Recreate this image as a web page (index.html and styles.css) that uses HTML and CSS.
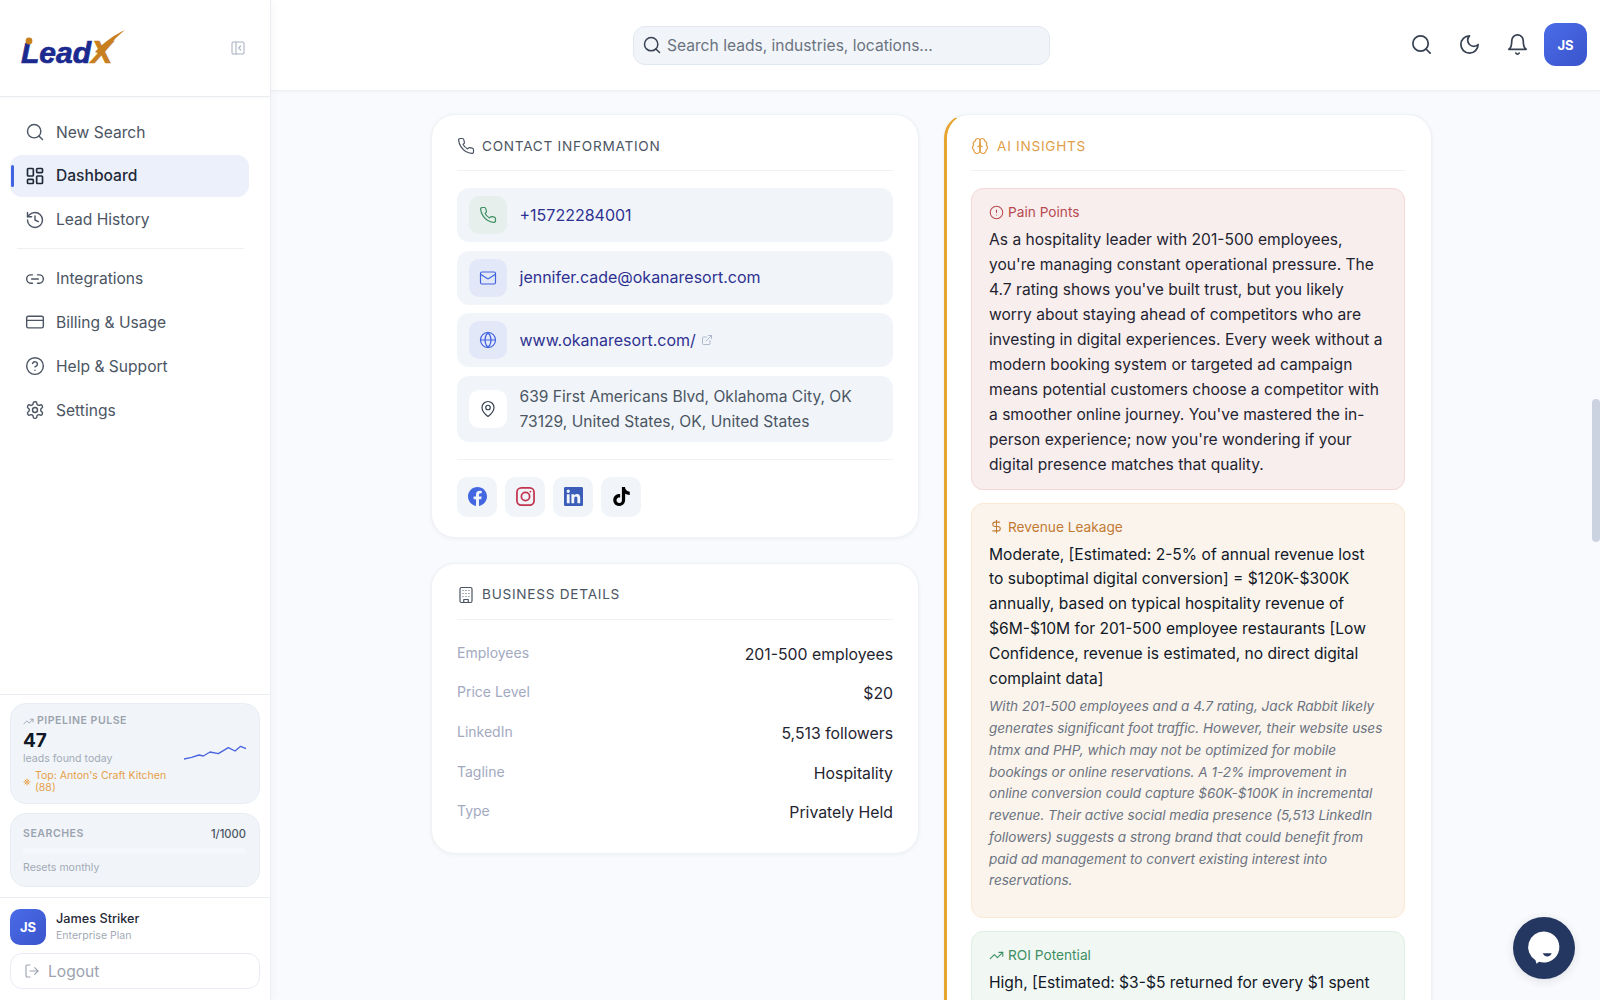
FILE: index.html
```html
<!DOCTYPE html>
<html lang="en">
<head>
<meta charset="utf-8">
<title>LeadX</title>
<link rel="stylesheet" href="styles.css">
</head>
<body>
<svg class="sprite" xmlns="http://www.w3.org/2000/svg">
<symbol id="i-search" viewBox="0 0 24 24"><circle cx="11" cy="11" r="8"/><path d="m21 21-4.3-4.3"/></symbol>
<symbol id="i-dash" viewBox="0 0 24 24"><rect x="3" y="3" width="7" height="9" rx="1"/><rect x="14" y="3" width="7" height="5" rx="1"/><rect x="14" y="12" width="7" height="9" rx="1"/><rect x="3" y="16" width="7" height="5" rx="1"/></symbol>
<symbol id="i-history" viewBox="0 0 24 24"><path d="M3 12a9 9 0 1 0 9-9 9.75 9.75 0 0 0-6.74 2.74L3 8"/><path d="M3 3v5h5"/><path d="M12 7v5l4 2"/></symbol>
<symbol id="i-link" viewBox="0 0 24 24"><path d="M9 17H7A5 5 0 0 1 7 7h2"/><path d="M15 7h2a5 5 0 1 1 0 10h-2"/><path d="M8 12h8"/></symbol>
<symbol id="i-card" viewBox="0 0 24 24"><rect x="2" y="5" width="20" height="14" rx="2"/><path d="M2 10h20"/></symbol>
<symbol id="i-help" viewBox="0 0 24 24"><circle cx="12" cy="12" r="10"/><path d="M9.09 9a3 3 0 0 1 5.83 1c0 2-3 3-3 3"/><path d="M12 17h.01"/></symbol>
<symbol id="i-gear" viewBox="0 0 24 24"><path d="M12.22 2h-.44a2 2 0 0 0-2 2v.18a2 2 0 0 1-1 1.73l-.43.25a2 2 0 0 1-2 0l-.15-.08a2 2 0 0 0-2.73.73l-.22.38a2 2 0 0 0 .73 2.73l.15.1a2 2 0 0 1 1 1.72v.51a2 2 0 0 1-1 1.74l-.15.09a2 2 0 0 0-.73 2.73l.22.38a2 2 0 0 0 2.73.73l.15-.08a2 2 0 0 1 2 0l.43.25a2 2 0 0 1 1 1.73V20a2 2 0 0 0 2 2h.44a2 2 0 0 0 2-2v-.18a2 2 0 0 1 1-1.73l.43-.25a2 2 0 0 1 2 0l.15.08a2 2 0 0 0 2.73-.73l.22-.39a2 2 0 0 0-.73-2.73l-.15-.08a2 2 0 0 1-1-1.74v-.5a2 2 0 0 1 1-1.74l.15-.09a2 2 0 0 0 .73-2.73l-.22-.38a2 2 0 0 0-2.73-.73l-.15.08a2 2 0 0 1-2 0l-.43-.25a2 2 0 0 1-1-1.73V4a2 2 0 0 0-2-2z"/><circle cx="12" cy="12" r="3"/></symbol>
<symbol id="i-phone" viewBox="0 0 24 24"><path d="M22 16.92v3a2 2 0 0 1-2.18 2 19.79 19.79 0 0 1-8.63-3.07 19.5 19.5 0 0 1-6-6 19.79 19.79 0 0 1-3.07-8.67A2 2 0 0 1 4.11 2h3a2 2 0 0 1 2 1.72 12.84 12.84 0 0 0 .7 2.81 2 2 0 0 1-.45 2.11L8.09 9.91a16 16 0 0 0 6 6l1.27-1.27a2 2 0 0 1 2.11-.45 12.84 12.84 0 0 0 2.81.7A2 2 0 0 1 22 16.92z"/></symbol>
<symbol id="i-mail" viewBox="0 0 24 24"><rect x="2" y="4" width="20" height="16" rx="2"/><path d="m22 7-8.97 5.7a1.94 1.94 0 0 1-2.06 0L2 7"/></symbol>
<symbol id="i-globe" viewBox="0 0 24 24"><circle cx="12" cy="12" r="10"/><path d="M12 2a14.5 14.5 0 0 0 0 20 14.5 14.5 0 0 0 0-20"/><path d="M2 12h20"/></symbol>
<symbol id="i-ext" viewBox="0 0 24 24"><path d="M15 3h6v6"/><path d="M10 14 21 3"/><path d="M18 13v6a2 2 0 0 1-2 2H5a2 2 0 0 1-2-2V8a2 2 0 0 1 2-2h6"/></symbol>
<symbol id="i-pin" viewBox="0 0 24 24"><path d="M20 10c0 6-8 12-8 12s-8-6-8-12a8 8 0 0 1 16 0Z"/><circle cx="12" cy="10" r="3"/></symbol>
<symbol id="i-building" viewBox="0 0 24 24"><rect x="4" y="2" width="16" height="20" rx="2"/><path d="M9 22v-4h6v4"/><path d="M8 6h.01M12 6h.01M16 6h.01M8 10h.01M12 10h.01M16 10h.01M8 14h.01M12 14h.01M16 14h.01"/></symbol>
<symbol id="i-brain" viewBox="0 0 24 24"><path d="M12 5a3 3 0 1 0-5.997.125 4 4 0 0 0-2.526 5.77 4 4 0 0 0 .556 6.588A4 4 0 1 0 12 18Z"/><path d="M12 5a3 3 0 1 1 5.997.125 4 4 0 0 1 2.526 5.77 4 4 0 0 1-.556 6.588A4 4 0 1 1 12 18Z"/><path d="M15 13a4.5 4.5 0 0 1-3-4 4.5 4.5 0 0 1-3 4"/><path d="M12 18V9"/></symbol>
<symbol id="i-alert" viewBox="0 0 24 24"><circle cx="12" cy="12" r="10"/><path d="M12 8v4"/><path d="M12 16h.01"/></symbol>
<symbol id="i-dollar" viewBox="0 0 24 24"><path d="M12 2v20"/><path d="M17 5H9.5a3.5 3.5 0 0 0 0 7h5a3.5 3.5 0 0 1 0 7H6"/></symbol>
<symbol id="i-trend" viewBox="0 0 24 24"><path d="M22 7l-8.5 8.5-5-5L2 17"/><path d="M16 7h6v6"/></symbol>
<symbol id="i-moon" viewBox="0 0 24 24"><path d="M12 3a6 6 0 0 0 9 9 9 9 0 1 1-9-9Z"/></symbol>
<symbol id="i-bell" viewBox="0 0 24 24"><path d="M6 8a6 6 0 0 1 12 0c0 7 3 9 3 9H3s3-2 3-9"/><path d="M10.3 21a1.94 1.94 0 0 0 3.4 0"/></symbol>
<symbol id="i-logout" viewBox="0 0 24 24"><path d="M9 21H5a2 2 0 0 1-2-2V5a2 2 0 0 1 2-2h4"/><path d="m16 17 5-5-5-5"/><path d="M21 12H9"/></symbol>
<symbol id="i-panel" viewBox="0 0 24 24"><rect x="3" y="3" width="18" height="18" rx="2"/><path d="M9 3v18"/><path d="m16 15-3-3 3-3"/></symbol>
<symbol id="i-spark" viewBox="0 0 24 24"><path d="M12 3v6M12 15v6M3 12h6M15 12h6M6 6l4 4M14 14l4 4M18 6l-4 4M10 14l-4 4"/></symbol>
</svg>

<div class="app">
  <aside class="sidebar">
    <div class="brand">
      <div class="logo">
        <span class="logo-lead">Lead</span><span class="logo-x">X</span>
        <svg class="logo-swoosh" viewBox="0 0 110 40"><circle cx="8" cy="13" r="3.4" fill="#c87f20"/><path d="M74 24C83 14 93 7 104 2 95 9 88 17 82 27Z" fill="#c87f20"/></svg>
      </div>
      <svg class="ic ic-collapse"><use href="#i-panel"/></svg>
    </div>
    <nav class="nav">
      <a class="nav-item"><svg class="ic"><use href="#i-search"/></svg>New Search</a>
      <a class="nav-item active"><svg class="ic"><use href="#i-dash"/></svg>Dashboard</a>
      <a class="nav-item"><svg class="ic"><use href="#i-history"/></svg>Lead History</a>
      <div class="nav-divider"></div>
      <a class="nav-item"><svg class="ic"><use href="#i-link"/></svg>Integrations</a>
      <a class="nav-item"><svg class="ic"><use href="#i-card"/></svg>Billing &amp; Usage</a>
      <a class="nav-item"><svg class="ic"><use href="#i-help"/></svg>Help &amp; Support</a>
      <a class="nav-item"><svg class="ic"><use href="#i-gear"/></svg>Settings</a>
    </nav>
    <div class="widgets">
      <div class="widget pulse">
        <div class="pulse-left">
          <div class="widget-title"><svg class="ic ic-title"><use href="#i-trend"/></svg>PIPELINE PULSE</div>
          <div class="pulse-num">47</div>
          <div class="widget-note">leads found today</div>
          <div class="pulse-top"><svg class="ic ic-spark"><use href="#i-spark"/></svg><span>Top: Anton's Craft Kitchen (88)</span></div>
        </div>
        <svg class="spark" viewBox="552 195 192 48"><polyline points="552,237 575,232 597,225 610,228 630,216 655,221 685,203 705,213 722,199 738,206"/></svg>
      </div>
      <div class="widget searches">
        <div class="searches-head"><span class="widget-title">SEARCHES</span><span class="searches-count">1/1000</span></div>
        <div class="bar"></div>
        <div class="widget-note">Resets monthly</div>
      </div>
    </div>
    <div class="account">
      <div class="user">
        <div class="avatar avatar-sm">JS</div>
        <div>
          <div class="user-name">James Striker</div>
          <div class="user-plan">Enterprise Plan</div>
        </div>
      </div>
      <button class="logout"><svg class="ic ic-logout"><use href="#i-logout"/></svg>Logout</button>
    </div>
  </aside>

  <main class="main">
    <header class="topbar">
      <div class="search"><svg class="ic ic-s"><use href="#i-search"/></svg><span>Search leads, industries, locations...</span></div>
      <div class="top-actions">
        <span class="top-btn"><svg class="ic ic-top"><use href="#i-search"/></svg></span>
        <span class="top-btn"><svg class="ic ic-top"><use href="#i-moon"/></svg></span>
        <span class="top-btn"><svg class="ic ic-top"><use href="#i-bell"/></svg></span>
        <div class="avatar avatar-lg">JS</div>
      </div>
    </header>
    <div class="content">
      <div class="grid">
        <div class="col">
          <section class="card">
            <h2 class="card-head"><svg class="ic ic-head"><use href="#i-phone"/></svg>CONTACT INFORMATION</h2>
            <div class="rows">
              <div class="row"><span class="row-ic green"><svg class="ic"><use href="#i-phone"/></svg></span><a class="row-link">+15722284001</a></div>
              <div class="row"><span class="row-ic blue"><svg class="ic"><use href="#i-mail"/></svg></span><a class="row-link">jennifer.cade@okanaresort.com</a></div>
              <div class="row"><span class="row-ic blue"><svg class="ic"><use href="#i-globe"/></svg></span><a class="row-link">www.okanaresort.com/</a><svg class="ic ic-ext"><use href="#i-ext"/></svg></div>
              <div class="row"><span class="row-ic white"><svg class="ic"><use href="#i-pin"/></svg></span><span class="row-text">639 First Americans Blvd, Oklahoma City, OK 73129, United States, OK, United States</span></div>
            </div>
            <div class="socials">
              <span class="social"><svg class="logo-fb" viewBox="0 0 24 24"><path d="M24 12.073c0-6.627-5.373-12-12-12s-12 5.373-12 12c0 5.99 4.388 10.954 10.125 11.854v-8.385H7.078v-3.47h3.047V9.43c0-3.007 1.792-4.669 4.533-4.669 1.312 0 2.686.235 2.686.235v2.953H15.83c-1.491 0-1.956.925-1.956 1.874v2.25h3.328l-.532 3.47h-2.796v8.385C19.612 23.027 24 18.062 24 12.073z"/></svg></span>
              <span class="social"><svg class="logo-ig" viewBox="0 0 24 24"><rect x="1.2" y="1.2" width="21.6" height="21.6" rx="5.5"/><circle cx="12" cy="12" r="5.2"/><circle class="ig-dot" cx="18.2" cy="5.8" r="1.2"/></svg></span>
              <span class="social"><svg class="logo-in" viewBox="0 0 24 24"><path d="M20.447 20.452h-3.554v-5.569c0-1.328-.027-3.037-1.852-3.037-1.853 0-2.136 1.445-2.136 2.939v5.667H9.351V9h3.414v1.561h.046c.477-.9 1.637-1.85 3.37-1.85 3.601 0 4.267 2.37 4.267 5.455v6.286zM5.337 7.433a2.062 2.062 0 0 1-2.063-2.065 2.064 2.064 0 1 1 2.063 2.065zm1.782 13.019H3.555V9h3.564v11.452zM22.225 0H1.771C.792 0 0 .774 0 1.729v20.542C0 23.227.792 24 1.771 24h20.451C23.2 24 24 23.227 24 22.271V1.729C24 .774 23.2 0 22.222 0h.003z"/></svg></span>
              <span class="social"><svg class="logo-tt" viewBox="0 0 24 24"><path d="M12.525.02c1.31-.02 2.61-.01 3.91-.02.08 1.53.63 3.09 1.75 4.17 1.12 1.11 2.7 1.62 4.24 1.79v4.03c-1.44-.05-2.89-.35-4.2-.97-.57-.26-1.1-.59-1.62-.93-.01 2.92.01 5.84-.02 8.75-.08 1.4-.54 2.79-1.35 3.94-1.31 1.92-3.58 3.17-5.91 3.21-1.43.08-2.86-.31-4.08-1.03-2.02-1.19-3.44-3.37-3.65-5.71-.02-.5-.03-1-.01-1.49.18-1.9 1.12-3.72 2.58-4.96 1.66-1.44 3.98-2.13 6.15-1.72.02 1.48-.04 2.96-.04 4.44-.99-.32-2.15-.23-3.02.37-.63.41-1.11 1.04-1.36 1.75-.21.51-.15 1.07-.14 1.61.24 1.64 1.82 3.02 3.5 2.87 1.12-.01 2.19-.66 2.77-1.61.19-.33.4-.67.41-1.06.1-1.79.06-3.57.07-5.36.01-4.03-.01-8.05.02-12.07z"/></svg></span>
            </div>
          </section>
          <section class="card card-details">
            <h2 class="card-head"><svg class="ic ic-head"><use href="#i-building"/></svg>BUSINESS DETAILS</h2>
            <dl class="details">
              <div class="detail"><dt>Employees</dt><dd>201-500 employees</dd></div>
              <div class="detail"><dt>Price Level</dt><dd>$20</dd></div>
              <div class="detail"><dt>LinkedIn</dt><dd>5,513 followers</dd></div>
              <div class="detail"><dt>Tagline</dt><dd>Hospitality</dd></div>
              <div class="detail"><dt>Type</dt><dd>Privately Held</dd></div>
            </dl>
          </section>
        </div>
        <section class="card card-ai">
          <h2 class="card-head head-ai"><svg class="ic ic-head"><use href="#i-brain"/></svg>AI INSIGHTS</h2>
          <div class="insights">
            <article class="insight pain">
              <h3><svg class="ic ic-label"><use href="#i-alert"/></svg>Pain Points</h3>
              <p class="body">As a hospitality leader with 201-500 employees, you're managing constant operational pressure. The 4.7 rating shows you've built trust, but you likely worry about staying ahead of competitors who are investing in digital experiences. Every week without a modern booking system or targeted ad campaign means potential customers choose a competitor with a smoother online journey. You've mastered the in-person experience; now you're wondering if your digital presence matches that quality.</p>
            </article>
            <article class="insight revenue">
              <h3><svg class="ic ic-label"><use href="#i-dollar"/></svg>Revenue Leakage</h3>
              <p class="body">Moderate, [Estimated: 2-5% of annual revenue lost to suboptimal digital conversion] = $120K-$300K annually, based on typical hospitality revenue of $6M-$10M for 201-500 employee restaurants [Low Confidence, revenue is estimated, no direct digital complaint data]</p>
              <p class="note">With 201-500 employees and a 4.7 rating, Jack Rabbit likely generates significant foot traffic. However, their website uses htmx and PHP, which may not be optimized for mobile bookings or online reservations. A 1-2% improvement in online conversion could capture $60K-$100K in incremental revenue. Their active social media presence (5,513 LinkedIn followers) suggests a strong brand that could benefit from paid ad management to convert existing interest into reservations.</p>
            </article>
            <article class="insight roi">
              <h3><svg class="ic ic-label"><use href="#i-trend"/></svg>ROI Potential</h3>
              <p class="body">High, [Estimated: $3-$5 returned for every $1 spent</p>
            </article>
          </div>
        </section>
      </div>
    </div>
    <div class="scroll-thumb"></div>
    <div class="chat">
      <svg viewBox="0 0 40 40"><path d="M20 9.4a10 10 0 1 1-3.2 19.5l-1.6 1.2-.7-2.2A10 10 0 0 1 20 9.4Z" fill="#fff"/><path d="M19.2 23.4c1.4 2.8 4.4 2.8 5.8 0Z" fill="#243760"/></svg>
    </div>
  </main>
</div>
</body>
</html>
```

FILE: styles.css
```css
* { box-sizing: border-box; }
html, body { margin: 0; height: 100%; overflow: hidden; }
body { font-family: Inter, "Liberation Sans", sans-serif; color: #1f2937; background: #f9fafd; }
.sprite { display: none; }
h2, h3, p, dl, dd { margin: 0; }

.ic { width: 20px; height: 20px; fill: none; stroke: currentColor; stroke-width: 2; stroke-linecap: round; stroke-linejoin: round; flex: none; }

.app { display: flex; height: 100vh; }

/* Sidebar */
.sidebar { width: 271px; flex: none; background: #fff; border-right: 1px solid #eceff4; box-shadow: 2px 0 8px rgba(30, 41, 59, .03); display: flex; flex-direction: column; position: relative; z-index: 2; }
.brand { height: 97px; flex: none; border-bottom: 1px solid #e9ecf1; box-shadow: 0 1px 2px rgba(30, 41, 59, .04); display: flex; align-items: center; justify-content: space-between; padding: 0 24px 0 21px; }
.logo { position: relative; width: 110px; height: 40px; font-family: "Liberation Sans", sans-serif; font-weight: 700; font-style: italic; line-height: 48px; white-space: nowrap; }
.logo-lead { font-size: 30px; color: #1b2a8f; -webkit-text-stroke: .7px #1b2a8f; }
.logo-x { font-size: 32px; color: #c87f20; -webkit-text-stroke: .7px #c87f20; }
.logo-swoosh { position: absolute; left: 0; top: 0; width: 110px; height: 40px; }
.ic-collapse { width: 16px; height: 16px; color: #aab2c2; stroke-width: 1.6; }

.nav { flex: 1; padding: 14px 21px 0 10px; display: flex; flex-direction: column; gap: 1.8px; }
.nav-item { position: relative; height: 42px; display: flex; align-items: center; gap: 11px; padding-left: 15px; border-radius: 12px; font-size: 15.6px; color: #4b5563; }
.nav-item .ic { stroke-width: 1.7; }
.nav-item.active { background: #ecf0fb; color: #1f2937; font-weight: 500; }
.nav-item.active .ic { stroke-width: 2; }
.nav-item.active::before { content: ""; position: absolute; left: 1px; top: 10px; bottom: 10px; width: 3px; border-radius: 2px; background: #4263e0; }
.nav-divider { height: 1px; background: #eef0f4; margin: 6px 5px 6.5px 7px; }

.widgets { border-top: 1px solid #e9ecf1; padding: 8px 10px 10px; display: flex; flex-direction: column; gap: 9px; }
.widget { background: #f1f5f9; border: 1px solid #e8edf3; border-radius: 16px; }
.pulse { height: 101px; padding: 10px 13px 10px 12px; display: flex; align-items: center; justify-content: space-between; }
.pulse-left { width: 150px; align-self: flex-start; }
.widget-title { display: flex; align-items: center; gap: 3px; font-size: 10.56px; line-height: 14px; font-weight: 600; letter-spacing: .05em; color: #9ca3af; }
.ic-title { width: 11px; height: 11px; stroke-width: 2; }
.pulse-num { font-size: 19px; line-height: 22px; font-weight: 700; color: #111827; margin-top: 2px; }
.widget-note { font-size: 10.56px; line-height: 13px; color: #a3aab6; }
.pulse-top { display: flex; align-items: center; gap: 4px; margin-top: 5px; font-size: 10.56px; line-height: 12px; color: #e6a04a; }
.ic-spark { width: 8px; height: 8px; stroke-width: 3; }
.spark { width: 64px; height: 16px; flex: none; margin: -2px -2px 0 0; }
.spark polyline { fill: none; stroke: #4a63e0; stroke-width: 4; stroke-linejoin: round; }
.searches { height: 74px; padding: 13px 13px 0 12px; }
.searches-head { display: flex; justify-content: space-between; align-items: center; height: 14px; }
.searches-count { font-size: 11.2px; font-weight: 500; color: #4b5563; }
.bar { height: 6px; border-radius: 3px; background: #f4f7fb; margin: 7px 0 6px; }
.searches .widget-note { line-height: 16px; }

.account { border-top: 1px solid #e9ecf1; padding: 11px 10px 11px; }
.user { display: flex; align-items: center; gap: 10px; height: 36px; }
.avatar { display: flex; align-items: center; justify-content: center; color: #fff; font-weight: 700; background: linear-gradient(135deg, #4a6ce8, #3a54cb); }
.avatar-sm { width: 36px; height: 36px; border-radius: 10px; font-size: 13px; }
.avatar-lg { width: 43px; height: 43px; border-radius: 12px; font-size: 13px; margin-left: -1px; }
.user-name { font-size: 12.7px; line-height: 18px; font-weight: 500; color: #1f2937; }
.user-plan { font-size: 10.56px; line-height: 16px; color: #a3aab6; }
.logout { width: 100%; height: 36px; margin-top: 8px; display: flex; align-items: center; gap: 8px; padding: 0 13px; background: #fff; border: 1px solid #e8ecf2; border-radius: 12px; font: inherit; font-size: 15.6px; color: #9ca3af; }
.ic-logout { width: 16px; height: 16px; stroke-width: 1.7; }

/* Main */
.main { flex: 1; min-width: 0; display: flex; flex-direction: column; position: relative; }
.topbar { height: 91px; flex: none; background: #fff; border-bottom: 1px solid #eef0f4; box-shadow: 0 1px 3px rgba(30, 41, 59, .03); display: flex; align-items: center; justify-content: space-between; padding: 0 13px 1px 362px; }
.search { width: 417px; height: 39px; margin-top: 1px; display: flex; align-items: center; gap: 5px; padding: 0 8px; background: #f1f5f9; border: 1px solid #e2e8f0; border-radius: 12px; font-size: 15.6px; color: #6b7280; }
.ic-s { width: 20px; height: 20px; color: #374151; stroke-width: 1.8; }
.top-actions { display: flex; align-items: center; gap: 8px; }
.top-btn { width: 40px; height: 40px; display: flex; align-items: center; justify-content: center; color: #374151; }
.ic-top { width: 23px; height: 23px; stroke-width: 1.8; }

.content { flex: 1; min-height: 0; overflow: hidden; padding: 23px 0 0 160px; }
.grid { width: 1001px; display: grid; grid-template-columns: 488px 488px; gap: 25px; align-items: start; }
.col { display: flex; flex-direction: column; gap: 25px; }
.card { background: #fff; border: 1px solid #eef1f5; border-radius: 24px; padding: 21px 25px 20px; box-shadow: 0 1px 4px rgba(30, 41, 59, .05); }
.card-head { display: flex; align-items: center; gap: 7px; height: 35px; padding-bottom: 14px; border-bottom: 1px solid #f0f2f5; font-size: 13.6px; line-height: 21px; font-weight: 400; letter-spacing: .055em; color: #4b5563; margin-bottom: 17px; }
.ic-head { width: 18px; height: 18px; stroke-width: 1.6; }
.rows { display: flex; flex-direction: column; gap: 8.7px; padding-bottom: 17px; border-bottom: 1px solid #f0f2f5; }
.row { display: flex; align-items: center; padding: 8px 12px; background: #f1f5f9; border-radius: 12px; font-size: 16px; line-height: 24.8px; }
.row-ic { width: 38px; height: 38px; flex: none; display: flex; align-items: center; justify-content: center; border-radius: 10px; margin-right: 12.5px; }
.row-ic .ic { width: 18px; height: 18px; stroke-width: 1.6; }
.green { background: #e6efec; color: #3d8f63; }
.blue { background: #e3e8f8; color: #4263e0; }
.white { background: #fff; color: #374151; }
.row-link { color: #2f3192; }
.row-text { color: #4b5563; font-size: 15.6px; padding-top: 1px; margin-bottom: -1px; }
.ic-ext { width: 12px; height: 12px; margin-left: 5px; color: #a3aec4; stroke-width: 1.7; }
.socials { display: flex; gap: 8px; margin-top: 17px; }
.social { width: 40px; height: 40px; display: flex; align-items: center; justify-content: center; background: #f1f5f9; border-radius: 10px; }
.social svg { width: 19px; height: 19px; }
.logo-fb { fill: #4267e0; }
.logo-in { fill: #3b5cb8; }
.logo-tt { fill: #000; }
.logo-ig { fill: none; stroke: #c1354f; stroke-width: 2.2; }
.ig-dot { fill: #c1354f; stroke: none; }

.details { padding-bottom: 8px; margin-top: 23px; }
.detail { display: flex; justify-content: space-between; align-items: flex-start; height: 39.7px; }
.detail:last-child { height: 24px; }
.detail dt { font-size: 14px; line-height: 20px; color: #a3a9bf; }
.detail dd { font-size: 15.8px; line-height: 24px; color: #1f2430; }

.card-ai { border-left: 3px solid #e6a431; padding: 21px 26px 20px 24px; height: 1200px; }
.head-ai { color: #e0a04a; gap: 8px; }
.insights { display: flex; flex-direction: column; gap: 13px; }
.insight { border: 1px solid; border-radius: 12px; padding: 12px 17px 11px 17px; }
.insight h3 { display: flex; align-items: center; gap: 4px; font-size: 13.7px; line-height: 22px; font-weight: 400; margin-bottom: 5px; }
.ic-label { width: 15px; height: 15px; stroke-width: 1.7; }
.body { font-size: 15.6px; line-height: 24.96px; color: #1f2430; }
.note { font-size: 13.55px; line-height: 21.76px; font-style: italic; color: #6b7280; margin: 4px 0 14px; }
.pain { background: #f8eeee; border-color: #f5d6d6; }
.pain h3 { color: #b84a4f; }
.revenue { background: #faf4ec; border-color: #fbe9d2; padding-right: 20px; }
.revenue h3 { color: #c27a34; }
.revenue .body { padding-right: 4px; }
.revenue .body, .roi .body { color: #111827; }
.roi { background: #f1f7f3; border-color: #deefe4; }
.roi h3 { color: #3d8f63; }

.scroll-thumb { position: absolute; right: 0; top: 399px; width: 8px; height: 143px; border-radius: 4px; background: #ccd3e0; }
.chat { position: absolute; left: 1242px; top: 917px; width: 62px; height: 62px; border-radius: 50%; background: #243760; box-shadow: 0 2px 10px rgba(30, 41, 59, .12); z-index: 3; }
.chat svg { display: block; width: 62px; height: 62px; }
```
